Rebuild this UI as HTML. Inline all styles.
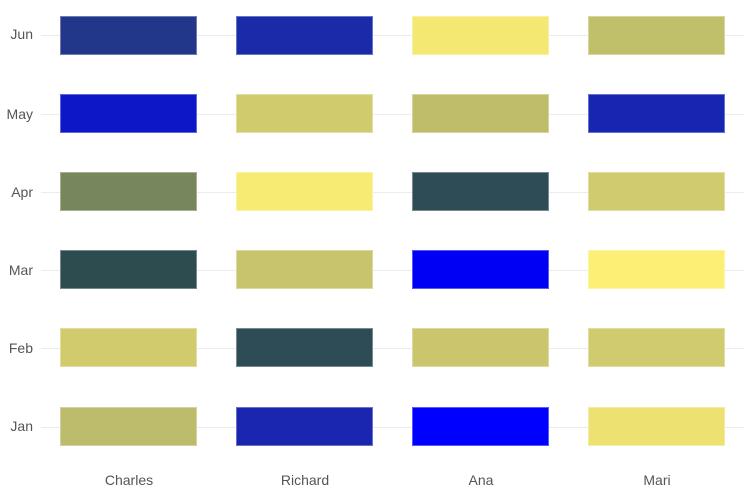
<!DOCTYPE html>
<html><head><style>
body{margin:0;width:754px;height:500px;background:#fff;font-family:"Liberation Sans",sans-serif;position:relative;overflow:hidden}
.g{position:absolute;left:41px;width:703px;height:1px;background:#ececec}
.r{position:absolute;width:135px;height:37px;border:1px solid rgba(255,255,255,0.35);box-sizing:content-box}
.y{position:absolute;right:721px;font-size:14px;color:#555;text-align:right}
.x{position:absolute;top:472px;font-size:14px;color:#555;width:136px;text-align:center}
</style></head><body>
<div class="g" style="top:35px"></div><div class="g" style="top:114px"></div><div class="g" style="top:192px"></div><div class="g" style="top:270px"></div><div class="g" style="top:348px"></div><div class="g" style="top:427px"></div>
<div class="y" style="top:26px">Jun</div><div class="y" style="top:106px">May</div><div class="y" style="top:184px">Apr</div><div class="y" style="top:262px">Mar</div><div class="y" style="top:340px">Feb</div><div class="y" style="top:418px">Jan</div>
<div class="x" style="left:61px">Charles</div><div class="x" style="left:237px">Richard</div><div class="x" style="left:413px">Ana</div><div class="x" style="left:589px">Mari</div>

<div class="r" style="left:60px;top:16px;background:#22378a"></div>
<div class="r" style="left:236px;top:16px;background:#1a2aa8"></div>
<div class="r" style="left:412px;top:16px;background:#f5e872"></div>
<div class="r" style="left:588px;top:16px;background:#c1c06a"></div>

<div class="r" style="left:60px;top:94px;background:#0d17c8"></div>
<div class="r" style="left:236px;top:94px;background:#d0cc6e"></div>
<div class="r" style="left:412px;top:94px;background:#bfbd6a"></div>
<div class="r" style="left:588px;top:94px;background:#1825b0"></div>

<div class="r" style="left:60px;top:172px;background:#77865d"></div>
<div class="r" style="left:236px;top:172px;background:#f7eb74"></div>
<div class="r" style="left:412px;top:172px;background:#2d4c55"></div>
<div class="r" style="left:588px;top:172px;background:#d0cb6e"></div>

<div class="r" style="left:60px;top:250px;background:#2d4c50"></div>
<div class="r" style="left:236px;top:250px;background:#c8c46e"></div>
<div class="r" style="left:412px;top:250px;background:#0000f5"></div>
<div class="r" style="left:588px;top:250px;background:#fdef75"></div>

<div class="r" style="left:60px;top:328px;background:#d2cb6e"></div>
<div class="r" style="left:236px;top:328px;background:#2d4c55"></div>
<div class="r" style="left:412px;top:328px;background:#cbc66e"></div>
<div class="r" style="left:588px;top:328px;background:#d0cb6e"></div>

<div class="r" style="left:60px;top:407px;background:#bcbc6c"></div>
<div class="r" style="left:236px;top:407px;background:#1a25b0"></div>
<div class="r" style="left:412px;top:407px;background:#0000ff"></div>
<div class="r" style="left:588px;top:407px;background:#ede271"></div>
</body></html>
